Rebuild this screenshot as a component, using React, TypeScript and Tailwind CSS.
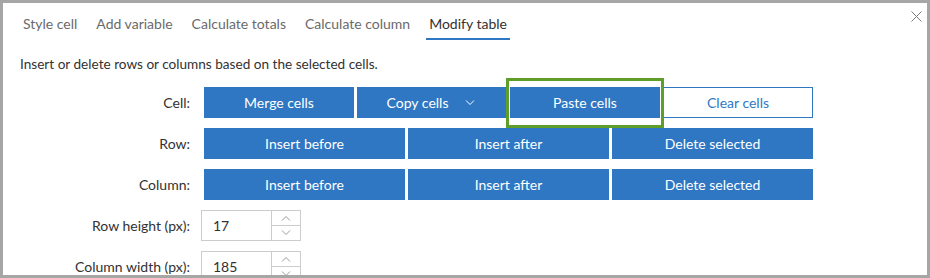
import React from 'react';

const tabs = ['Style cell', 'Add variable', 'Calculate totals', 'Calculate column', 'Modify table'];

const Chevron: React.FC<{ up?: boolean; className?: string }> = ({ up, className }) => (
  <svg width="10" height="6" viewBox="0 0 10 6" className={className}>
    <path d={up ? 'M1 5.5 L5 1.5 L9 5.5' : 'M1 0.5 L5 4.5 L9 0.5'} fill="none" stroke="currentColor" strokeWidth="1" />
  </svg>
);

const Btn: React.FC<{ w: string; children: React.ReactNode }> = ({ w, children }) => (
  <button className={`${w} h-[31px] bg-[#2f77c2] text-white text-[14px] flex items-center justify-center`}>
    {children}
  </button>
);

const Stepper: React.FC<{ label: string; value: string }> = ({ label, value }) => (
  <div className="flex items-center">
    <div className="w-[187px] text-right text-[14px] text-[#323232]">{label}</div>
    <div className="ml-[11px] w-[100px] h-[31px] border border-[#cccccc] flex">
      <div className="flex-1 flex items-center pl-[11px] text-[14px] text-[#323232]">{value}</div>
      <div className="w-[29px] border-l border-[#cccccc] flex flex-col">
        <div className="flex-1 flex items-center justify-center text-[#9a9a9a] border-b border-[#cccccc]">
          <Chevron up />
        </div>
        <div className="flex-1 flex items-center justify-center text-[#9a9a9a]">
          <Chevron />
        </div>
      </div>
    </div>
  </div>
);

const App: React.FC = () => {
  return (
    <div
      className="relative w-[930px] h-[278px] overflow-hidden bg-white border-[3px] border-[#a6a6a6]"
      style={{ fontFamily: 'Lato, "Open Sans", sans-serif' }}
    >
      {/* close */}
      <button className="absolute left-[908px] top-[8px] text-[#7a7a7a]">
        <svg width="11" height="11" viewBox="0 0 11 11">
          <path d="M0.5 0.5 L10.5 10.5 M10.5 0.5 L0.5 10.5" stroke="currentColor" strokeWidth="1" />
        </svg>
      </button>

      {/* tabs */}
      <div className="flex gap-[13px] pl-[17px] pt-[11px]">
        {tabs.map(t => (
          <div
            key={t}
            className={`px-[3px] pb-[4px] text-[14px] leading-[20px] border-b-2 ${
              t === 'Modify table' ? 'border-[#2f77c2] text-[#323232]' : 'border-transparent text-[#6a6a6a]'
            }`}
          >
            {t}
          </div>
        ))}
      </div>

      <div className="pl-[17px] mt-[14px] text-[13.6px] leading-[20px] text-[#323232]">
        Insert or delete rows or columns based on the selected cells.
      </div>

      <div className="mt-[13px] flex flex-col gap-[10px]">
        <div className="flex items-center">
          <div className="w-[187px] text-right text-[14px] text-[#323232]">Cell:</div>
          <div className="ml-[14px] flex gap-[3px]">
            <Btn w="w-[150px]">Merge cells</Btn>
            <Btn w="w-[150px]">
              <span className="ml-[-2px]">Copy cells</span>
              <Chevron className="ml-[17px] text-white" />
            </Btn>
            <div className="relative">
              <Btn w="w-[150px]">Paste cells</Btn>
              <span className="absolute left-[-4px] right-[-4px] top-[-9px] bottom-[-10px] border-[3px] border-[#5f9f29]" />
            </div>
            <button className="w-[150px] h-[31px] border border-[#2f77c2] bg-white text-[#2f77c2] text-[14px]">
              Clear cells
            </button>
          </div>
        </div>

        {['Row:', 'Column:'].map(l => (
          <div key={l} className="flex items-center">
            <div className="w-[187px] text-right text-[14px] text-[#323232]">{l}</div>
            <div className="ml-[14px] flex gap-[3px]">
              <Btn w="w-[201px]">Insert before</Btn>
              <Btn w="w-[201px]">Insert after</Btn>
              <Btn w="w-[201px]">Delete selected</Btn>
            </div>
          </div>
        ))}

        <Stepper label="Row height (px):" value="17" />
        <Stepper label="Column width (px):" value="185" />
      </div>
    </div>
  );
};

export default App;
